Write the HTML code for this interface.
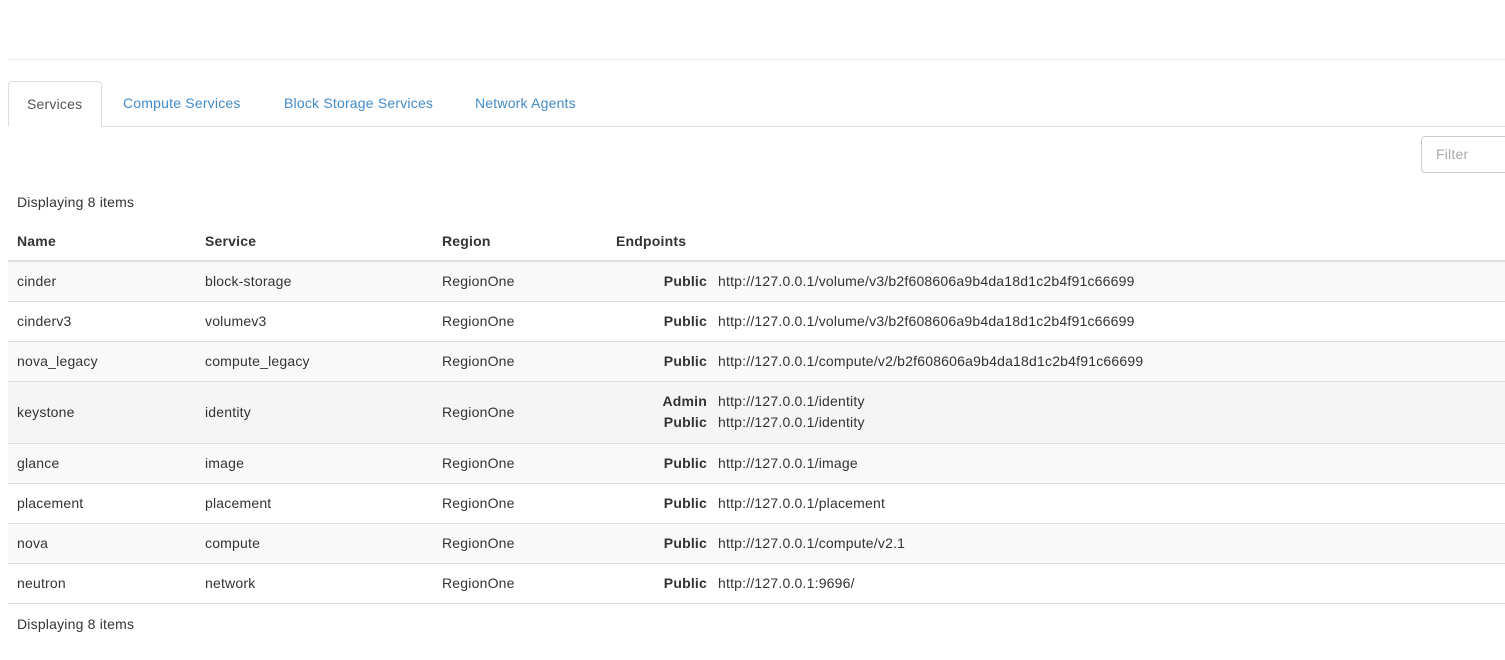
<!DOCTYPE html>
<html><head><style>
*{box-sizing:border-box;margin:0;padding:0}
body{width:1505px;height:660px;overflow:hidden;background:#fff;font-family:"Liberation Sans",Arial,sans-serif;font-size:14px;color:#333;position:relative;letter-spacing:0.2px}
.hr{position:absolute;left:8px;right:0;top:59px;border-top:1px solid #eee}
.tabs{position:absolute;left:8px;right:0;top:81px;height:46px;border-bottom:1px solid #ddd}
.tab{position:absolute;top:0;height:46px;line-height:44px;color:#428bca;padding:0 15px}
.tab.a{color:#555;border:1px solid #ddd;border-bottom-color:#fff;border-radius:4px 4px 0 0;background:#fff;height:46px;padding:0 18px}
.filter{position:absolute;left:1421px;top:136px;width:100px;height:37px;border:1px solid #ccc;border-radius:4px;color:#aaa;padding:0 14px;line-height:35px}
.disp{position:absolute;left:17px}
table{position:absolute;left:8px;top:221px;width:1497px;border-collapse:collapse}
th{text-align:left;font-weight:bold;height:40px;border-bottom:2px solid #ddd;padding:0 9px;vertical-align:middle}
td{padding:0 9px;border-top:1px solid #ddd;height:40px;vertical-align:middle}
tr.s td{background:#f9f9f9}
tr.h td{background:#f5f5f5;height:62px}
.ep{display:flex;line-height:21px}
.ep b{width:91px;text-align:right;margin-right:11px}
.last{border-bottom:1px solid #ddd}
</style></head><body>
<div class="hr"></div>
<div class="tabs">
<div class="tab a" style="left:0;width:94px">Services</div>
<div class="tab" style="left:100px">Compute Services</div>
<div class="tab" style="left:261px">Block Storage Services</div>
<div class="tab" style="left:452px">Network Agents</div>
</div>
<div class="filter">Filter</div>
<div class="disp" style="top:194px">Displaying 8 items</div>
<table>
<tr><th style="width:188px">Name</th><th style="width:237px">Service</th><th style="width:174px">Region</th><th>Endpoints</th></tr>
<tr class="s"><td>cinder</td><td>block-storage</td><td>RegionOne</td><td><div class="ep"><b>Public</b>http://127.0.0.1/volume/v3/b2f608606a9b4da18d1c2b4f91c66699</div></td></tr>
<tr><td>cinderv3</td><td>volumev3</td><td>RegionOne</td><td><div class="ep"><b>Public</b>http://127.0.0.1/volume/v3/b2f608606a9b4da18d1c2b4f91c66699</div></td></tr>
<tr class="s"><td>nova_legacy</td><td>compute_legacy</td><td>RegionOne</td><td><div class="ep"><b>Public</b>http://127.0.0.1/compute/v2/b2f608606a9b4da18d1c2b4f91c66699</div></td></tr>
<tr class="h"><td>keystone</td><td>identity</td><td>RegionOne</td><td><div class="ep"><b>Admin</b>http://127.0.0.1/identity</div><div class="ep"><b>Public</b>http://127.0.0.1/identity</div></td></tr>
<tr class="s"><td>glance</td><td>image</td><td>RegionOne</td><td><div class="ep"><b>Public</b>http://127.0.0.1/image</div></td></tr>
<tr><td>placement</td><td>placement</td><td>RegionOne</td><td><div class="ep"><b>Public</b>http://127.0.0.1/placement</div></td></tr>
<tr class="s"><td>nova</td><td>compute</td><td>RegionOne</td><td><div class="ep"><b>Public</b>http://127.0.0.1/compute/v2.1</div></td></tr>
<tr class="last"><td>neutron</td><td>network</td><td>RegionOne</td><td><div class="ep"><b>Public</b>http://127.0.0.1:9696/</div></td></tr>
</table>
<div class="disp" style="top:616px">Displaying 8 items</div>
</body></html>
